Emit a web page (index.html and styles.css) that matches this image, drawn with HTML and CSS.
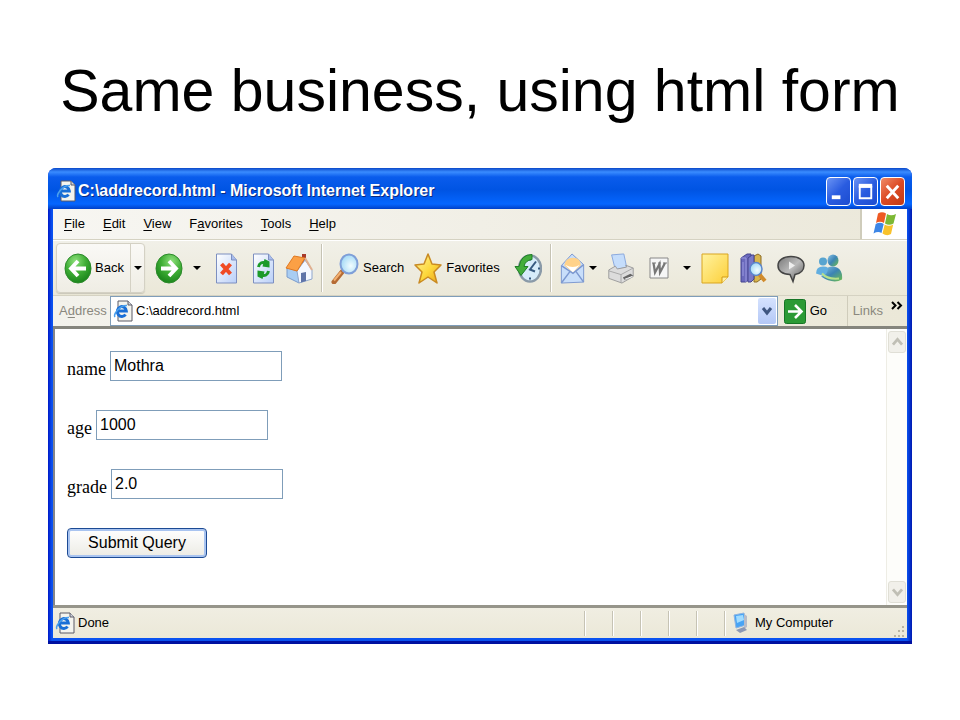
FILE: index.html
```html
<!DOCTYPE html>
<html lang="en">
<head>
<meta charset="utf-8">
<title>Same business, using html form</title>
<link rel="stylesheet" href="styles.css">
</head>
<body>
<svg class="defs" aria-hidden="true">
  <defs>
    <radialGradient id="green" cx=".4" cy=".25" r=".8"><stop offset="0" stop-color="#8fe07c"/><stop offset=".5" stop-color="#3fae35"/><stop offset="1" stop-color="#168018"/></radialGradient>
    <linearGradient id="paper" x1="0" y1="0" x2="1" y2="1"><stop offset="0" stop-color="#fff"/><stop offset="1" stop-color="#b9cff8"/></linearGradient>
    <linearGradient id="gold" x1="0" y1="0" x2="1" y2="1"><stop offset="0" stop-color="#fff6a0"/><stop offset=".55" stop-color="#fdd83c"/><stop offset="1" stop-color="#e9a01a"/></linearGradient>
    <linearGradient id="note" x1="0" y1="0" x2="1" y2="1"><stop offset="0" stop-color="#fff3a0"/><stop offset="1" stop-color="#fdcf38"/></linearGradient>
    <radialGradient id="lens" cx=".6" cy=".6" r=".6"><stop offset="0" stop-color="#f2fdff"/><stop offset="1" stop-color="#a5daf6"/></radialGradient>
    <linearGradient id="grey" x1="0" y1="0" x2="1" y2="1"><stop offset="0" stop-color="#777"/><stop offset=".5" stop-color="#bbb"/><stop offset="1" stop-color="#555"/></linearGradient>
    <linearGradient id="teal" x1="0" y1="0" x2="1" y2="1"><stop offset="0" stop-color="#8cc4e8"/><stop offset=".5" stop-color="#3c84b4"/><stop offset="1" stop-color="#6fc04a"/></linearGradient>
    <symbol id="page-e" viewBox="0 0 20 22">
      <path d="M5 1h10l4 4v16H5z" fill="#f4f4ee" stroke="#5b5b66"/>
      <path d="M15 1v4h4" fill="#cfd3dc" stroke="#5b5b66"/>
      <path d="M12.500 14.500a4.500 5 0 1 1 .8-3.500H5" fill="none" stroke="#1a6fd6" stroke-width="3"/>
      <path d="M2 17C0 14 7 5 14 5.500" fill="none" stroke="#4aa0ee" stroke-width="1.500"/>
    </symbol>
    <symbol id="arrow-disc" viewBox="0 0 28 30">
      <ellipse cx="14" cy="15" rx="13" ry="14.500" fill="url(#green)" stroke="#2c8a2a"/>
      <path d="M22 15H8M14 7.500L7 15l7 7.500" fill="none" stroke="#fff" stroke-width="3.800"/>
    </symbol>
  </defs>
</svg>

<main class="slide">
  <h1>Same business, using html form</h1>

  <section class="window" aria-label="Microsoft Internet Explorer">
    <header class="titlebar">
      <svg class="i-page"><use href="#page-e"/></svg>
      <span class="caption">C:\addrecord.html - Microsoft Internet Explorer</span>
      <button class="wbtn" aria-label="Minimize"><svg viewBox="0 0 24 28"><rect x="5" y="18" width="9" height="4" fill="#fff"/></svg></button>
      <button class="wbtn" aria-label="Maximize"><svg viewBox="0 0 24 28"><path d="M6 9h12v12H6z" fill="none" stroke="#fff" stroke-width="2"/><path d="M5 8h14" stroke="#fff" stroke-width="4"/></svg></button>
      <button class="wbtn close" aria-label="Close"><svg viewBox="0 0 24 28"><path d="M6 8l12 13M18 8L6 21" stroke="#fff" stroke-width="3"/></svg></button>
    </header>

    <nav class="menubar" aria-label="Menu">
      <button><u>F</u>ile</button><button><u>E</u>dit</button><button><u>V</u>iew</button><button>F<u>a</u>vorites</button><button><u>T</u>ools</button><button><u>H</u>elp</button>
      <span class="flag"><svg viewBox="0 0 24 26">
        <path d="M5 2.500Q9 0 13 2.500L11 12Q7 9.500 3 12z" fill="#ee5a24"/>
        <path d="M14 3Q18 5.500 23 3l-2.500 9.500Q16 15 12 12.500z" fill="#7cb834"/>
        <path d="M2.700 13Q7 10.500 10.700 13L8.500 22Q5 20 .5 22.500z" fill="#3d86e6"/>
        <path d="M11.700 13.500Q16 16 20.200 13.500L18 23Q14 25.500 9.500 22.500z" fill="#f8c22c"/>
      </svg></span>
    </nav>

    <div class="toolbar" role="toolbar" aria-label="Standard buttons">
      <div class="split">
        <button class="back"><svg class="i28"><use href="#arrow-disc"/></svg>Back</button>
        <button class="drop" aria-label="Back history"><i class="caret"></i></button>
      </div>
      <button aria-label="Forward"><svg class="i28 flip"><use href="#arrow-disc"/></svg></button>
      <button aria-label="Forward history"><i class="caret"></i></button>
      <button class="wide" aria-label="Stop"><svg class="i22" viewBox="0 0 22 31"><path d="M1 1h15l5 6v23H1z" fill="url(#paper)" stroke="#7c8fc0"/><path d="M16 1v6h5" fill="#a9bdec" stroke="#7c8fc0"/><path d="M6 11l9 10M15 11L6 21" stroke="#f04a24" stroke-width="4"/></svg></button>
      <button class="wide" aria-label="Refresh"><svg class="i22" viewBox="0 0 22 31"><path d="M1 1h15l5 6v23H1z" fill="url(#paper)" stroke="#7c8fc0"/><path d="M16 1v6h5" fill="#a9bdec" stroke="#7c8fc0"/><path d="M6 14q1-6 8-4M16 18q-1 6-8 4" fill="none" stroke="#1d9a2a" stroke-width="3"/><path d="M12 6l5 2.500v6l-7-1zM10 26l-5-2.500v-6l7 1z" fill="#1d9a2a"/></svg></button>
      <button aria-label="Home"><svg class="i28" viewBox="0 0 28 31"><path d="M17 1h4v9h-4z" fill="#a83a2a"/><path d="M2 14l12 5v11L2 24z" fill="#a9cdf2" stroke="#7b9ccc"/><path d="M12 18l8-11 7 10v9l-13 4z" fill="#f4f8ff" stroke="#8fa6cc"/><path d="M16 20l5-1v9l-5 1.500z" fill="#5f74a8"/><path d="M1 15L9 3l11 2-8 13z" fill="#fba045" stroke="#e07820"/><path d="M20 5l7 12" stroke="#e0b090" stroke-width="2"/></svg></button>
      <span class="sep"></span>
      <button class="text"><svg class="i28" viewBox="0 0 28 31"><path d="M11 19L3 29" stroke="#b56b34" stroke-width="5" stroke-linecap="round"/><path d="M10 19L3 27.500" stroke="#f3b070" stroke-width="2"/><ellipse cx="18" cy="11" rx="8.500" ry="9.500" fill="url(#lens)" stroke="#7f9fd8" stroke-width="2"/></svg>Search</button>
      <button class="text star"><svg class="i28" viewBox="0 0 28 31"><path d="M14 1l4 10 9 1-7 7 3 11-9-6-9 6 3-11-7-7 9-1z" fill="url(#gold)" stroke="#c98a22" stroke-width="1.500" stroke-linejoin="round"/></svg>Favorites</button>
      <button class="wide" aria-label="History"><svg class="i28" viewBox="0 0 28 30"><ellipse cx="16" cy="15" rx="11" ry="13" fill="#d7ecfa" stroke="#8a9aa8" stroke-width="2.500"/><path d="M22 8l-6 8 5 2M16 5v2M16 24v2M24 15h2" fill="none" stroke="#375a80" stroke-width="2"/><path d="M18 1Q7 1 5 13H1l6 9 7-9h-4q1-6 8-7z" fill="#43ad3b" stroke="#1f7e26"/></svg></button>
      <span class="sep"></span>
      <button aria-label="Mail"><svg class="i25" viewBox="0 0 25 32"><path d="M1 13L12 1l12 11v18L1 31z" fill="#c8defa" stroke="#7c98d0"/><path d="M4 13q1-8 9-8t8 8l-8 7z" fill="#ffd28a"/><path d="M5 12q8 5 15 0l-7 8z" fill="#fff"/><path d="M1 13l12 8 11-9M1 31l9-12M24 30l-8-11" fill="none" stroke="#7c98d0" stroke-width="1.500"/></svg></button>
      <button class="near" aria-label="Mail options"><i class="caret"></i></button>
      <button aria-label="Print"><svg class="i28" viewBox="0 0 28 33"><path d="M4 2l13-1 3 14-12 3z" fill="#c5ddfb" stroke="#86a5dc"/><path d="M1 18l7-4 2 3 10-2-1-2 8 3v9l-12 7-14-5z" fill="#dcdcdc" stroke="#9a9a9a"/><path d="M1 19l13 4 13-7M14 23v9" fill="none" stroke="#a5a5a5"/><path d="M16 26l8-4 3 2-9 5z" fill="#666"/><path d="M18 28l8-3" stroke="#fff"/></svg></button>
      <button class="wide" aria-label="Edit with Word"><svg class="i20" viewBox="0 0 20 22"><path d="M1 1h18v20H1z" fill="#f6f6f6" stroke="#888"/><path d="M4.500 6l1.500 9.500L10.500 7l.5 8.500L16 6" fill="none" stroke="#777" stroke-width="2.200"/><path d="M3 6h4M9 6h3M14 6h4" stroke="#777"/></svg></button>
      <button class="wide" aria-label="Edit options"><i class="caret"></i></button>
      <button aria-label="Discuss"><svg class="i28" viewBox="0 0 28 31"><path d="M1 1h26v23l-6 6H1z" fill="url(#note)" stroke="#d9a520"/><path d="M21 30v-6h6" fill="#fff0a0" stroke="#d09a18"/></svg></button>
      <button aria-label="Research"><svg class="i28" viewBox="0 0 28 31"><path d="M2 5l6-4h4v24l-5 4H2z" fill="#6a69bc" stroke="#45448e"/><path d="M2 5h5v24M4 9v14" fill="none" stroke="#9b9ae0"/><path d="M15 3l4-2 3 2v23l-4 3h-3z" fill="#d9b54c" stroke="#8d6c26"/><path d="M9 5l4-3h2v24l-3 3H9z" fill="#7a79c8" stroke="#45448e"/><path d="M20 21l6 7" stroke="#d18b2c" stroke-width="4"/><ellipse cx="17" cy="16" rx="6" ry="6.500" fill="url(#lens)" stroke="#5b86cc" stroke-width="1.500"/></svg></button>
      <button aria-label="Talk"><svg class="i28" viewBox="0 0 28 28"><path d="M14 2c8 0 13 4 13 9 0 4-3 8-9 9l-2 7-3-7C5 20 1 16 1 11 1 6 6 2 14 2z" fill="url(#grey)" stroke="#444" stroke-width="1.500"/><path d="M12 7l6 4-6 4z" fill="#eee"/></svg></button>
      <button aria-label="Messenger"><svg class="i28" viewBox="0 0 28 30"><circle cx="8" cy="8" r="4" fill="#58a4d0"/><path d="M1 20q0-7 7-7t6 5l-4 5z" fill="#62aee0"/><ellipse cx="18" cy="7" rx="5.500" ry="6" fill="url(#teal)"/><path d="M6 23q7-1 7-9 4-2 9 0 6 3 5 12-9 5-21-3z" fill="url(#teal)"/><path d="M7 20q5 6 17 5" fill="none" stroke="#b7e08a" stroke-width="2"/></svg></button>
    </div>

    <div class="addressbar">
      <label for="addr">A<u>d</u>dress</label>
      <div class="combo">
        <svg class="i-page"><use href="#page-e"/></svg>
        <input id="addr" type="text" value="C:\addrecord.html">
        <button class="combo-btn" aria-label="Show addresses"><svg viewBox="0 0 18 26"><path d="M5 10l4 5 4-5" fill="none" stroke="#3f5680" stroke-width="3"/></svg></button>
      </div>
      <button class="go"><svg viewBox="0 0 22 25"><rect x=".5" y=".5" width="21" height="24" rx="2" fill="#2b9a35" stroke="#177526"/><path d="M4 12.500h13M11 6l6.500 6.500L11 19" fill="none" stroke="#fff" stroke-width="2.600"/></svg>Go</button>
      <button class="links">Links</button>
      <button class="more" aria-label="More links"><svg viewBox="0 0 12 9"><path d="M1 1l3.500 3.500L1 8M6.500 1L10 4.500 6.500 8" fill="none" stroke="#000" stroke-width="2"/></svg></button>
    </div>

    <div class="viewport">
      <form class="record" onsubmit="return false">
        <div class="row"><label for="name">name</label><input id="name" type="text" value="Mothra"></div>
        <div class="row"><label for="age">age</label><input id="age" type="text" value="1000"></div>
        <div class="row"><label for="grade">grade</label><input id="grade" type="text" value="2.0"></div>
        <button class="submit" type="submit">Submit Query</button>
      </form>
      <div class="scroll">
        <button aria-label="Scroll up"><svg viewBox="0 0 18 22"><path d="M4 14l5-6 5 6" fill="none" stroke="#c0bfb5" stroke-width="3"/></svg></button>
        <button aria-label="Scroll down"><svg viewBox="0 0 18 22"><path d="M4 8l5 6 5-6" fill="none" stroke="#c0bfb5" stroke-width="3"/></svg></button>
      </div>
    </div>

    <footer class="status">
      <svg class="i-page"><use href="#page-e"/></svg>
      <span class="done">Done</span>
      <span class="cell"></span><span class="cell"></span><span class="cell"></span><span class="cell"></span><span class="cell"></span>
      <span class="zone"><svg viewBox="0 0 16 22"><path d="M1 3l10-2 2 12-10 3z" fill="#48a4f4" stroke="#8fb4e0"/><path d="M3 4l7-1 1 5-7 3z" fill="#a2dcff"/><path d="M11 2l3 2v11l-3 2z" fill="#b8bcc8"/><path d="M3 18l8-3 3 3-7 3z" fill="#8c98b4"/></svg>My Computer</span>
      <svg class="grip" viewBox="0 0 13 13"><path d="M10 1h2v2h-2zM6 5h2v2H6zM10 5h2v2h-2zM2 10h2v2H2zM6 10h2v2H6zM10 10h2v2h-2z" fill="#b8b4a2"/></svg>
    </footer>
  </section>
</main>
</body>
</html>
```
FILE: styles.css
```css
* { box-sizing: border-box; }
body { margin: 0; background: #fff; color: #000; }
.defs { position: absolute; width: 0; height: 0; }
.slide { padding: 56px 48px 48px; }
h1 {
  margin: 0 0 42px;
  font: 400 59px/70px "Liberation Sans", Arial, sans-serif;
  text-align: center;
  white-space: nowrap;
}
button { margin: 0; padding: 0; border: 0; background: none; color: inherit; font: inherit; }
svg { display: block; flex: none; }
u { text-underline-offset: 2px; }

.window {
  padding: 0 5px 6px;
  border-radius: 8px 8px 0 0;
  background: linear-gradient(90deg, #0019c8, #0a52f0 4px, #0a52f0 calc(100% - 5px), #0019b0);
  box-shadow: inset 0 -3px #0010a0;
  font: 13px/20px "Liberation Sans", Arial, sans-serif;
}
.titlebar {
  display: flex;
  align-items: center;
  gap: 2px;
  height: 41px;
  margin: 0 -5px;
  padding: 5px 7px 0 8px;
  border-radius: 8px 8px 0 0;
  background: linear-gradient(#0a48c8, #3a8cff 4px, #0a5cec 9px, #0054e3 22px, #0566ff 36px, #0040c8);
  color: #fff;
}
.i-page { width: 20px; height: 22px; }
.caption { flex: 1; font-size: 16px; font-weight: 700; text-shadow: 1px 1px #0a2a80; white-space: nowrap; }
.wbtn { width: 25px; height: 29px; border: 1px solid #fff; border-radius: 4px; background: linear-gradient(135deg, #6b94f4, #2a5ce0 50%, #1c4cd0); }
.wbtn svg { width: 23px; height: 27px; }
.close { background: linear-gradient(135deg, #f08c68, #dc4a24 50%, #c03a14); }

.menubar { display: flex; align-items: center; gap: 18px; height: 31px; padding-left: 11px; background: linear-gradient(90deg, #f7f6f2, #ebe8da); border-bottom: 1px solid #d5d2c2; }
.flag { display: grid; place-items: center; align-self: stretch; width: 47px; margin-left: auto; background: #fff; border-left: 2px solid #cfccbb; }
.flag svg { width: 24px; height: 26px; }

.toolbar { display: flex; align-items: center; gap: 10px; height: 56px; padding-left: 3px; border-top: 1px solid #fff; border-bottom: 1px solid #d5d2c2; background: linear-gradient(#f1f0e8, #ebe8d8); }
.toolbar svg { height: 31px; }
.split { display: flex; align-items: stretch; width: 89px; height: 50px; border: 1px solid #d4d1c4; border-radius: 4px; background: linear-gradient(#faf9f6, #efede4); box-shadow: 0 1px 1px #c9c6b8; }
.back { display: flex; flex: 1; align-items: center; gap: 3px; padding-left: 7px; }
.drop { display: grid; place-items: center; width: 14px; border-left: 1px solid #d4d1c4; }
.caret { display: block; border: solid transparent; border-width: 4px 4px 0; border-top-color: #000; }
.i28 { width: 28px; }
.i25 { width: 25px; }
.i22 { width: 23px; }
.toolbar .i20 { width: 20px; height: 22px; }
.flip { transform: scaleX(-1); }
.wide { margin-left: 4px; }
.near { margin-left: -6px; }
.text { display: flex; align-items: center; gap: 4px; }
.sep { width: 2px; height: 48px; margin: 0 -2px; border-left: 1px solid #c6c3b4; border-right: 1px solid #fff; }

.addressbar { display: flex; align-items: center; height: 33px; padding-left: 6px; border-bottom: 3px solid #85857d; background: linear-gradient(90deg, #f3f2ec, #ebe8d8); }
.addressbar label { width: 51px; color: #8a887e; }
.combo { display: flex; flex: 1; align-items: center; height: 30px; padding: 0 1px 0 2px; border: 1px solid #7f9db9; background: #fff; }
.combo input { flex: 1; min-width: 0; padding: 0 0 0 3px; border: 0; outline: 0; background: none; font: inherit; }
.combo-btn { width: 18px; height: 26px; border-radius: 2px; background: linear-gradient(#d5e2fe, #b4c8f6); }
.go { display: flex; align-items: center; gap: 4px; width: 69px; padding-left: 6px; }
.go svg { width: 22px; height: 25px; }
.links { align-self: stretch; padding: 0 8px 0 5px; border-left: 1px solid #cfccbb; color: #8a887e; }
.more { align-self: flex-start; padding: 5px 4px 0 0; }
.more svg { width: 12px; height: 9px; }

.viewport { display: flex; justify-content: space-between; min-height: 276px; border-left: 2px solid #85858a; background: #fff; }
.record { display: grid; align-content: start; justify-items: start; gap: 29px; padding: 22px 12px 40px; }
.row { display: flex; align-items: flex-end; gap: 4px; }
.row label { font: 18px/23px "Liberation Serif", "Times New Roman", serif; }
.row input { width: 172px; height: 30px; padding: 0 3px; border: 1px solid #7f9db9; outline: 0; background: #fff; font-family: inherit; font-size: 16px; }
.submit { width: 140px; height: 30px; border: 1px solid #1c4a94; border-radius: 4px; background: linear-gradient(#fff, #ecebe4); box-shadow: inset 0 0 0 2px #a9c4f0; font-size: 16px; }
.scroll { display: flex; flex-direction: column; justify-content: space-between; width: 21px; padding: 2px 1px; border-left: 1px solid #eeede5; background: #fdfdfa; }
.scroll button { border: 1px solid #e0dfd6; border-radius: 3px; background: #f1f0ea; }
.scroll svg { width: 17px; height: 20px; }

.status { display: flex; align-items: center; height: 33px; padding-left: 2px; border-top: 3px solid #96958a; background: linear-gradient(#f0eee2, #ebe8d8); }
.done { flex: 1; padding-left: 3px; }
.cell { width: 28px; height: 25px; border-left: 1px solid #c6c3b4; box-shadow: inset 1px 0 #fff; }
.zone { display: flex; align-items: center; gap: 6px; width: 168px; height: 25px; padding-left: 8px; border-left: 1px solid #c6c3b4; box-shadow: inset 1px 0 #fff; }
.zone svg { width: 16px; height: 22px; }
.grip { align-self: flex-end; width: 13px; height: 13px; margin-right: 2px; }
```
